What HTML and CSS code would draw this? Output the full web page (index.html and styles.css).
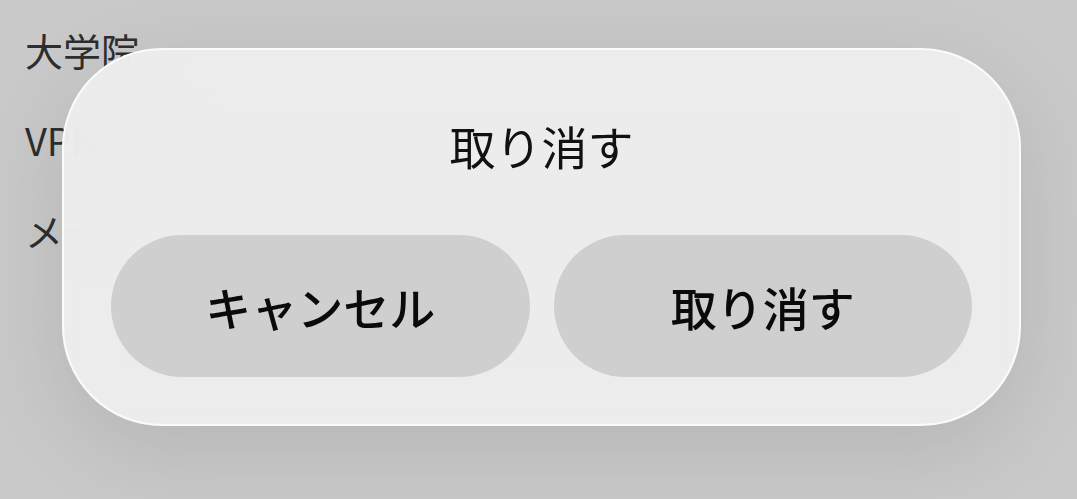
FILE: index.html
```html
<!DOCTYPE html>
<html lang="ja">
<head>
  <meta charset="UTF-8">
  <meta name="viewport" content="width=device-width, initial-scale=1.0">
  <title>取り消す</title>
  <link rel="stylesheet" href="styles.css">
</head>
<body>
  <ul class="settings">
    <li>大学院</li>
    <li>VPN設定</li>
    <li>メールアカウントの設定と変更</li>
  </ul>

  <div class="dialog">
    <h1 class="dialog-title">取り消す</h1>
    <div class="dialog-actions">
      <button class="btn">キャンセル</button>
      <button class="btn">取り消す</button>
    </div>
  </div>
</body>
</html>
```

FILE: styles.css
```css
body {
  margin: 0;
  background: #c9c9c9;
  font-family: "Noto Sans CJK JP", "Noto Sans", sans-serif;
  overflow: hidden;
}
.settings {
  list-style: none;
  margin: 0;
  padding: 5px 0 0 25px;
}
.settings li {
  font-size: 38px;
  line-height: 90px;
  color: #2e2e2e;
  white-space: nowrap;
}
.dialog {
  position: absolute;
  left: 62px;
  top: 48px;
  width: 959px;
  box-sizing: border-box;
  padding: 63px 47px 47px 47px;
  border: 2px solid #fbfbfb;
  border-radius: 100px;
  background: rgba(238, 238, 238, 0.95);
  backdrop-filter: blur(24px);
  box-shadow: 0 24px 90px rgba(0, 0, 0, 0.1);
}
.dialog-title {
  margin: 0;
  text-align: center;
  font-size: 46px;
  font-weight: 400;
  line-height: 64px;
  color: #111;
}
.dialog-actions {
  display: flex;
  gap: 24px;
  margin-top: 58px;
}
.btn {
  flex: 1;
  height: 142px;
  border: none;
  border-radius: 71px;
  background: #cfcfcf;
  font-family: inherit;
  font-size: 46px;
  font-weight: 500;
  color: #0a0a0a;
}
```
